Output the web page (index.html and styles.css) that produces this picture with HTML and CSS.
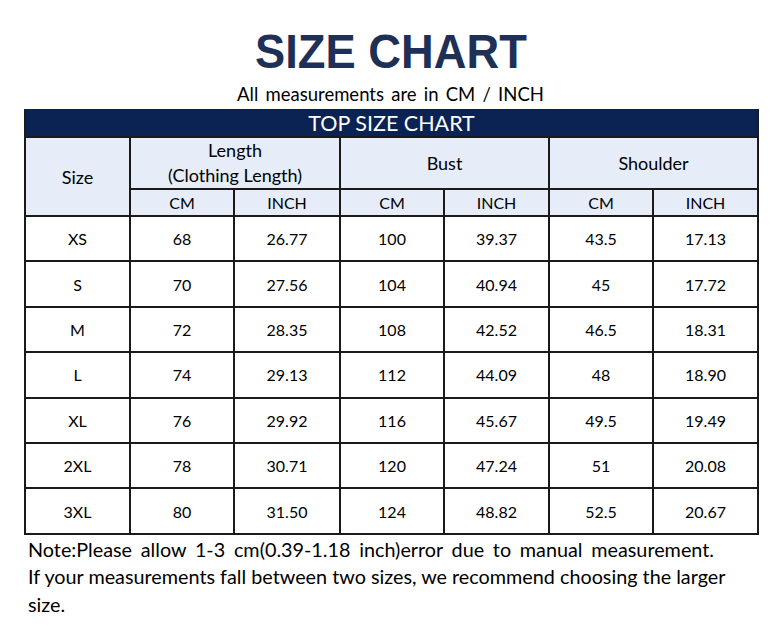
FILE: index.html
```html
<!DOCTYPE html>
<html>
<head>
<meta charset="utf-8">
<link rel="stylesheet" href="styles.css">
</head>
<body>
<div class="page">
  <h1 class="title"><span class="title-text">SIZE CHART</span></h1>
  <p class="subtitle">All measurements are in CM / INCH</p>
  <table class="chart">
    <colgroup>
      <col class="c0"><col class="c1"><col class="c2"><col class="c3"><col class="c4"><col class="c5"><col class="c6">
    </colgroup>
    <thead>
      <tr class="bar"><th colspan="7">TOP SIZE CHART</th></tr>
      <tr class="group">
        <th rowspan="2" class="size-head">Size</th>
        <th colspan="2">Length<br>(Clothing Length)</th>
        <th colspan="2">Bust</th>
        <th colspan="2">Shoulder</th>
      </tr>
      <tr class="unit">
        <th>CM</th><th>INCH</th><th>CM</th><th>INCH</th><th>CM</th><th>INCH</th>
      </tr>
    </thead>
    <tbody>
      <tr><td>XS</td><td>68</td><td>26.77</td><td>100</td><td>39.37</td><td>43.5</td><td>17.13</td></tr>
      <tr><td>S</td><td>70</td><td>27.56</td><td>104</td><td>40.94</td><td>45</td><td>17.72</td></tr>
      <tr><td>M</td><td>72</td><td>28.35</td><td>108</td><td>42.52</td><td>46.5</td><td>18.31</td></tr>
      <tr><td>L</td><td>74</td><td>29.13</td><td>112</td><td>44.09</td><td>48</td><td>18.90</td></tr>
      <tr><td>XL</td><td>76</td><td>29.92</td><td>116</td><td>45.67</td><td>49.5</td><td>19.49</td></tr>
      <tr><td>2XL</td><td>78</td><td>30.71</td><td>120</td><td>47.24</td><td>51</td><td>20.08</td></tr>
      <tr><td>3XL</td><td>80</td><td>31.50</td><td>124</td><td>48.82</td><td>52.5</td><td>20.67</td></tr>
    </tbody>
  </table>
  <div class="notes">
    <p class="note-first">Note:Please allow 1-3 cm(0.39-1.18 inch)error due to manual measurement.</p>
    <p class="note-rest">If your measurements fall between two sizes, we recommend choosing the larger size.</p>
  </div>
</div>
</body>
</html>
```

FILE: styles.css
```css
* { box-sizing: border-box; }
html, body { margin: 0; padding: 0; background: #fff; }
body { font-family: Lato, "Open Sans", sans-serif; color: #000; }

.page {
  width: 781px;
  padding: 25px 24px 0 24px;
}

.title {
  margin: 0;
  height: 52px;
  text-align: center;
  font-family: "Liberation Sans", Arial, sans-serif;
  font-weight: bold;
  font-size: 49px;
  line-height: 52px;
  color: #1f3056;
}
.title-text {
  display: inline-block;
  transform: scaleX(0.925);
}

.subtitle {
  margin: 0;
  height: 32px;
  padding-top: 5px;
  text-align: center;
  font-size: 18.5px;
  line-height: 24px;
  color: #000;
  word-spacing: 2.5px;
}

.chart {
  width: 733px;
  border-collapse: collapse;
  table-layout: fixed;
  font-size: 16px;
  color: #000;
}
.c0 { width: 105px; }
.c1 { width: 104px; }
.c2 { width: 106px; }
.c3 { width: 104px; }
.c4 { width: 105px; }
.c5 { width: 104px; }
.c6 { width: 105px; }

.chart th, .chart td {
  border: 2px solid #1a1a1a;
  text-align: center;
  padding: 0;
  font-weight: normal;
}

.bar th {
  background: #0b2352;
  color: #fff;
  font-size: 21.5px;
  height: 27px;
  line-height: 22px;
  padding-bottom: 2px;
  border-color: #0b2352 #1a1a1a #1a1a1a #1a1a1a;
}

.group th, .unit th {
  background: #e6edf8;
  color: #000;
}
.group th {
  height: 52px;
  font-size: 18px;
  line-height: 25px;
}
.group th.size-head { padding-top: 1px; }
.unit th { height: 27px; line-height: 22px; font-size: 16px; }

.chart td {
  height: 45.4px;
  font-size: 16px;
}

.notes {
  padding: 1px 4px 0 4px;
  font-size: 19.8px;
  line-height: 27.5px;
  color: #000;
}
.notes p { margin: 0; }
.note-first {
  width: 686px;
  text-align: justify;
  text-align-last: justify;
  white-space: nowrap;
}
.note-rest { width: 705px; }
```
